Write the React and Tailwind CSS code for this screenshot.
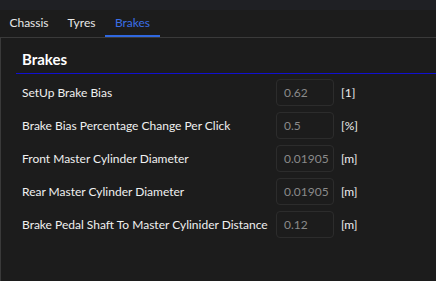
import React from "react";

const rows = [
  ["SetUp Brake Bias", "0.62", "[1]"],
  ["Brake Bias Percentage Change Per Click", "0.5", "[%]"],
  ["Front Master Cylinder Diameter", "0.01905", "[m]"],
  ["Rear Master Cylinder Diameter", "0.01905", "[m]"],
  ["Brake Pedal Shaft To Master Cylinider Distance", "0.12", "[m]"],
];

export default function App() {
  return (
    <div
      className="w-[436px] h-[281px] bg-[#1c1c1c] flex flex-col overflow-hidden"
      style={{ fontFamily: 'Lato, "Noto Sans", sans-serif' }}
    >
      <div className="h-[10px] bg-[#1f2024]" />
      <div className="flex h-[27px] text-[12px] text-[#e8e8e8]">
        <div className="w-[58px] flex items-center justify-center border-b-2 border-transparent">Chassis</div>
        <div className="w-[47px] flex items-center justify-center border-b-2 border-transparent">Tyres</div>
        <div className="w-[55px] flex items-center justify-center border-b-2 border-[#3068e0] text-[#3b6fe6]">Brakes</div>
      </div>
      <div className="flex-1 border-t border-l border-[#3a3a3a] pl-[15px] pt-[11px]">
        <div className="pl-[6px] text-[15px] font-bold text-white leading-[20px] h-[24px]">Brakes</div>
        <div className="h-px bg-[#1010d0]" />
        <div className="flex flex-col gap-[6px] pt-[5px] pl-[6px]">
          {rows.map(([label, val, unit]) => (
            <div key={label} className="flex items-center h-[27px] text-[12px]">
              <div className="w-[254px] text-[#f0f0f0] whitespace-nowrap">{label}</div>
              <div className="w-[58px] h-[27px] border border-[#2c2c2c] rounded-[4px] flex items-center pl-[7px] text-[#8a8a8a]">
                {val}
              </div>
              <div className="pl-[7px] text-[#f0f0f0]">{unit}</div>
            </div>
          ))}
        </div>
      </div>
    </div>
  );
}
